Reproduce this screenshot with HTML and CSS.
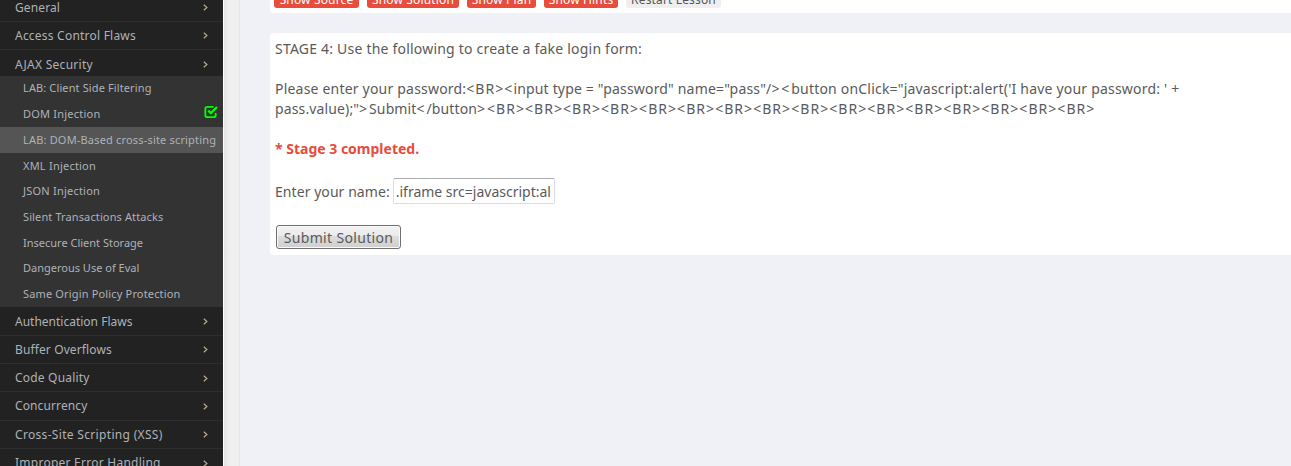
FILE: index.html
```html
<!DOCTYPE html>
<html lang="en">
<head>
<meta charset="utf-8">
<title>WebGoat</title>
<link rel="stylesheet" href="styles.css">
</head>
<body>
<svg class="defs"><symbol id="chev" viewBox="0 0 5 7"><path d="M.8.7 3.9 3.5.8 6.3" fill="none" stroke="currentColor" stroke-width="1.2"/></symbol></svg>
<div class="app">
<nav class="side">
<div class="cat"><span class="w1">General</span><svg class="chev"><use href="#chev"/></svg></div>
<div class="cat"><span class="w2">Access Control Flaws</span><svg class="chev"><use href="#chev"/></svg></div>
<div class="cat open"><span class="w3">AJAX Security</span><svg class="chev"><use href="#chev"/></svg></div>
<div class="sub">
<div class="item"><span class="s1">LAB: Client Side Filtering</span></div>
<div class="item"><span class="s2">DOM Injection</span><svg class="check" viewBox="0 0 14 14"><path d="M9.5 1.8H3.6Q1.3 1.8 1.3 4.1v5.8q0 2.3 2.3 2.3h5.8q2.3 0 2.3-2.3V8" fill="none" stroke="#0f0" stroke-width="1.8"/><path d="M4.3 5.6 6.8 8.1 13 2" fill="none" stroke="#0f0" stroke-width="2.3"/></svg></div>
<div class="item active"><span class="s3">LAB: DOM-Based cross-site scripting</span></div>
<div class="item"><span class="s4">XML Injection</span></div>
<div class="item"><span class="s5">JSON Injection</span></div>
<div class="item"><span class="s6">Silent Transactions Attacks</span></div>
<div class="item"><span class="s7">Insecure Client Storage</span></div>
<div class="item"><span class="s8">Dangerous Use of Eval</span></div>
<div class="item"><span class="s9">Same Origin Policy Protection</span></div>
</div>
<div class="cat"><span class="w4">Authentication Flaws</span><svg class="chev"><use href="#chev"/></svg></div>
<div class="cat"><span class="w5">Buffer Overflows</span><svg class="chev"><use href="#chev"/></svg></div>
<div class="cat"><span class="w6">Code Quality</span><svg class="chev"><use href="#chev"/></svg></div>
<div class="cat"><span class="w7">Concurrency</span><svg class="chev"><use href="#chev"/></svg></div>
<div class="cat"><span class="w8">Cross-Site Scripting (XSS)</span><svg class="chev"><use href="#chev"/></svg></div>
<div class="cat"><span class="w9">Improper Error Handling</span><svg class="chev"><use href="#chev"/></svg></div>
</nav>
<div class="gutter"></div>
<main class="main">
<div class="toolbar">
<span class="btn b1">Show Source</span><span class="btn b2">Show Solution</span><span class="btn b3">Show Plan</span><span class="btn b4">Show Hints</span><span class="btn b5">Restart Lesson</span>
</div>
<section class="lesson">
<p class="line"><span class="l1">STAGE 4: Use the following to create a fake login form:</span></p>
<p class="line code"><span class="l2">Please enter your password:</span><span class="tags">&lt;BR&gt;&lt;</span><span class="l2b">input type = "password" name="pass"/</span><span class="angle">&gt;&lt;</span><span class="l2c">button onClick="javascript:alert('I have your password: ' +</span><br><span class="l3">pass.value);"</span><span class="angle">&gt;</span><span class="l3">Submit</span><span class="angle">&lt;</span><span class="l3">/button</span><span class="angle">&gt;</span><span class="tags">&lt;BR&gt;&lt;BR&gt;&lt;BR&gt;&lt;BR&gt;&lt;BR&gt;&lt;BR&gt;&lt;BR&gt;&lt;BR&gt;&lt;BR&gt;&lt;BR&gt;&lt;BR&gt;&lt;BR&gt;&lt;BR&gt;&lt;BR&gt;&lt;BR&gt;&lt;BR&gt;</span></p>
<p class="line done"><span class="l5">* Stage 3 completed.</span></p>
<div class="field"><span class="l6">Enter your name:</span><div class="input"><span class="l7">.iframe src=javascript:al</span></div></div>
<div class="submit"><span class="l8">Submit Solution</span></div>
</section>
</main>
</div>
</body>
</html>
```
FILE: styles.css
```css
* { box-sizing: border-box; }
body { margin: 0; font-family: "Noto Sans", sans-serif; background: #f0f1f7; }
.defs { display: none; }
.app { display: flex; height: 466px; overflow: hidden; }
.side { width: 223px; flex: none; background: #222; color: #aeb2b7; margin-top: -6.6px; height: 473px; white-space: nowrap; }
.cat { height: 28.3px; padding: 1px 13px 0 15px; display: flex; align-items: center; justify-content: space-between; border-bottom: 1px solid #2e2e2e; font-size: 12px; line-height: 18px; }
.cat.open { height: 26.1px; border-bottom: 0; padding-top: 3px; }
.w1 { letter-spacing: .12px; }
.w2 { letter-spacing: .22px; }
.w3 { letter-spacing: .27px; }
.w5 { letter-spacing: .12px; }
.w6 { letter-spacing: .2px; }
.w7 { letter-spacing: .12px; }
.w8 { letter-spacing: .32px; }
.w9 { letter-spacing: .25px; }
.chev { width: 5px; height: 7px; margin-right: 2px; color: #b8a890; }
.sub { background: #333; height: 231.3px; }
.item { height: 25.67px; padding: 0 5px 1px 23px; display: flex; align-items: center; justify-content: space-between; font-size: 11px; line-height: 16px; }
.item.active { background: #555; padding-bottom: 0; }
.item:first-child, .item:nth-child(2) { padding-bottom: 2px; }
.item:nth-child(4), .item:nth-child(7) { padding-bottom: 0; }
.s1, .s6 { letter-spacing: .12px; }
.s2, .s4, .s5 { letter-spacing: .22px; }
.s3 { letter-spacing: .18px; }
.s9 { letter-spacing: .16px; }
.check { width: 14px; height: 14px; margin-bottom: 3px; }
.gutter { width: 17px; flex: none; border-left: 1px solid #fff; border-right: 1px solid #e6e6ea; background: linear-gradient(90deg, #e3e3e3, #efefef 5px); }
.main { flex: 1; padding-left: 30px; min-width: 0; color: #5a5a5a; }
.toolbar { height: 13px; background: #fff; border-radius: 0 0 0 4px; padding-left: 4px; display: flex; gap: 8px; align-items: flex-end; padding-bottom: 5px; }
.btn { height: 22px; line-height: 27px; font-size: 12px; text-align: center; border-radius: 3px; background: #e74c3c; color: #fff; white-space: nowrap; letter-spacing: .15px; }
.b1 { width: 85px; }
.b2 { width: 92px; }
.b3 { width: 69px; }
.b4 { width: 74px; }
.b5 { width: 95px; background: #efefef; color: #555; }
.lesson { margin-top: 20px; height: 222px; background: #fff; border-radius: 4px 0 0 4px; padding: 6px 5px; font-size: 14px; line-height: 20px; white-space: nowrap; }
.line { margin: 0 0 20px; }
.l1 { letter-spacing: .21px; }
.l2 { letter-spacing: .2px; }
.l2b { letter-spacing: .17px; }
.l2c { letter-spacing: .2px; }
.l3 { letter-spacing: .13px; }
.tags { letter-spacing: 1.05px; }
.angle { letter-spacing: 1.9px; }
.l6 { letter-spacing: .06px; }
.l8 { letter-spacing: .33px; }
.done { color: #e74c3c; font-weight: bold; margin-bottom: 19px; }
.field { display: flex; align-items: center; height: 26px; }
.l6 { padding-top: 1px; }
.input { width: 162px; height: 26px; margin-left: 3px; padding: 2px; border: 1px solid #dcdce6; border-top-color: #abadb3; border-radius: 2px; overflow: hidden; line-height: 22px; }
.submit { width: 125px; height: 24px; margin: 21px 0 0 1px; text-align: center; line-height: 23px; border: 1px solid #707070; border-radius: 3px; background: linear-gradient(#f2f2f2, #ebebeb 45%, #ddd 46%, #cfcfcf); box-shadow: inset 0 0 0 1px #fafafa; }
```
